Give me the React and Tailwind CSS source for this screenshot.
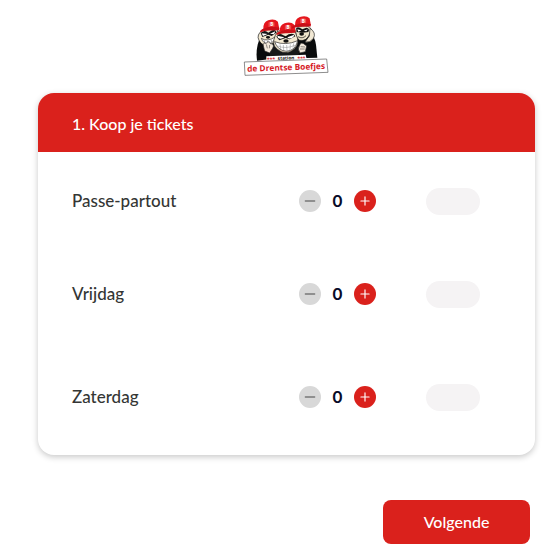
import { useState } from 'react'
import { Minus, Plus } from 'lucide-react'

const tickets = [
  { id: 'passe-partout', name: 'Passe-partout', spacing: 'mt-[35px]' },
  { id: 'vrijdag', name: 'Vrijdag', spacing: 'mt-[65px]' },
  { id: 'zaterdag', name: 'Zaterdag', spacing: 'mt-[75px]' },
]

function Cap({ letter }) {
  return (
    <g>
      <path d="M1 27 Q0 7 15 2 Q33 -4 43 6 L47 26 Q24 18 1 27Z" fill="#e5161d" />
      <path d="M3 25 Q-10 29 -8 36 Q8 30 21 31 L46 30 L47 23 Q20 17 3 25Z" fill="#c80f17" />
      <path d="M16 8 Q24 4 33 8 L33 20 Q24 17 16 21Z" fill="#ee5552" />
      <text x="25" y="19" textAnchor="middle" fill="#fff" fontSize="13" fontWeight="700">{letter}</text>
    </g>
  )
}

function Logo() {
  return (
    <svg viewBox="0 0 300 210" className="h-[70px] w-[100px] font-['Open_Sans',sans-serif]" role="img" aria-label="Station de Drentse Boefjes">
      {/* Black jumpers */}
      <path d="M70 88 Q58 121 63 152 L103 147 L124 91 L117 64 L82 65Z" fill="#090b0c" />
      <path d="M171 88 L220 68 Q237 80 240 104 L244 143 L180 145Z" fill="#090b0c" />
      <path d="M101 143 Q99 115 118 98 L183 104 Q192 120 187 143Z" fill="#17191a" />

      {/* Left head */}
      <path d="M80 59 Q60 75 69 91 Q79 111 103 104 Q124 97 129 75 L122 55 Q96 48 80 59Z" fill="#f3e9d0" stroke="#111" strokeWidth="2" />
      <path d="M74 69 Q86 57 97 68 L108 61 Q121 57 121 68 L107 78 L97 74 L79 81Z" fill="#121315" />
      <path d="M77 70 L95 72 L81 78ZM102 71 L118 64 L114 73Z" fill="#fff" />
      <path d="M76 85 Q94 97 119 80 Q114 99 98 102 Q82 102 76 85Z" fill="#fff" stroke="#222" strokeWidth="2" />
      <path d="M84 91 L87 98 M94 93 L96 100 M105 89 L107 96" stroke="#555" strokeWidth="1.5" />
      <ellipse cx="96" cy="82" rx="6" ry="4" fill="#111" />

      {/* Right head */}
      <path d="M181 54 Q175 82 191 91 Q211 94 219 76 L226 57 Q216 45 199 48Z" fill="#eee4cb" stroke="#111" strokeWidth="2" />
      <path d="M181 55 Q192 50 199 58 L211 53 Q223 55 217 66 L201 68 L182 66Z" fill="#111" />
      <path d="M184 58 L196 61 L187 65ZM203 62 L215 58 L211 64Z" fill="#fff" />
      <ellipse cx="197" cy="72" rx="7" ry="5" fill="#111" />
      <path d="M186 80 Q199 88 210 77" fill="none" stroke="#111" strokeWidth="2" />
      <path d="M222 55 Q242 68 232 86 Q222 99 207 96 L220 78Z" fill="#f1e8d4" stroke="#222" strokeWidth="2" />

      {/* Middle head */}
      <path d="M124 65 Q108 91 115 108 Q135 135 163 125 Q190 112 185 86 L177 64 Q150 52 124 65Z" fill="#f4ead2" stroke="#111" strokeWidth="2" />
      <path d="M121 80 Q128 67 142 76 L149 79 L158 73 Q175 67 178 79 L161 88 L149 84 L130 91Z" fill="#111" />
      <path d="M124 77 L145 82 Q136 89 126 84ZM154 82 L175 74 Q172 87 157 85Z" fill="#fff" />
      <path d="M116 95 Q149 108 185 92 Q179 122 151 124 Q124 121 116 95Z" fill="#fff" stroke="#222" strokeWidth="2" />
      <path d="M122 107 Q150 119 179 105 M132 103 L134 117 M142 105 L143 121 M152 105 L153 123 M163 103 L162 120 M173 100 L171 113" fill="none" stroke="#888" strokeWidth="1.5" />
      <ellipse cx="150" cy="93" rx="8" ry="5" fill="#111" />

      {/* Gloves */}
      <path d="M82 108 Q80 97 90 100 L96 95 Q104 95 103 101 Q117 101 110 115 L101 129 L86 123Z" fill="#f2e9db" stroke="#222" strokeWidth="2" />
      <path d="M91 103 L94 115 M101 105 L100 115" stroke="#222" strokeWidth="1.5" />
      <path d="M191 105 Q195 95 203 101 L212 108 L208 125 L192 129 Q183 117 191 105Z" fill="#f2e9db" stroke="#222" strokeWidth="2" />
      <path d="M194 110 L207 111 M192 117 L206 117" stroke="#222" strokeWidth="1.5" />

      {/* Caps */}
      <g transform="translate(81 29) scale(1.04 1.05)"><Cap letter="B" /></g>
      <g transform="translate(130 38) scale(1.04 1.02)"><Cap letter="B" /></g>
      <g transform="translate(176 19) scale(1.04 1.02)"><Cap letter="B" /></g>

      {/* Name plate */}
      <path d="M91 139 L209 134 L213 151 L91 158Z" fill="#fff" />
      <path d="M25 156 L272 147 L276 187 L27 196Z" fill="#fff" stroke="#555" strokeWidth="2" />
      <g transform="rotate(-2 150 165)" textAnchor="middle" fontWeight="700">
        <text x="151" y="149" fill="#111" fontSize="14">station</text>
        <text x="106" y="152" fill="#d6232b" fontSize="15">***</text>
        <text x="197" y="152" fill="#d6232b" fontSize="15">***</text>
        <text x="150" y="181" fill="#d6181f" fontSize="25">de Drentse Boefjes</text>
      </g>
    </svg>
  )
}

function TicketRow({ ticket, count, onChange }) {
  return (
    <li className={`flex h-7 items-center ${ticket.spacing}`}>
      <span className="flex-1 text-[17px] leading-6 font-medium text-[#343634]">{ticket.name}</span>
      <div className="flex items-center" role="group" aria-label={ticket.name}>
        <button
          type="button"
          aria-label={`Minder ${ticket.name}`}
          onClick={() => onChange(Math.max(0, count - 1))}
          className="flex size-[22px] items-center justify-center rounded-full bg-[#d8d8d8] text-[#777]"
        >
          <Minus className="size-4" strokeWidth={2} />
        </button>
        <output className="w-[33px] text-center text-[17px] leading-6 font-bold text-[#070b28]">{count}</output>
        <button
          type="button"
          aria-label={`Meer ${ticket.name}`}
          onClick={() => onChange(count + 1)}
          className="flex size-[22px] items-center justify-center rounded-full bg-[#da211c] text-white"
        >
          <Plus className="size-3.5" strokeWidth={2} />
        </button>
      </div>
      <span className="ml-[50px] h-[27px] w-[54px] rounded-full bg-[#f5f3f4]" />
    </li>
  )
}

export default function App() {
  const [counts, setCounts] = useState({})

  return (
    <main className="min-h-screen bg-white pt-2.5 pr-[25px] pb-4 pl-[38px] font-[Lato,sans-serif]">
      <header className="flex justify-center pr-[1px]">
        <Logo />
      </header>

      <section className="mt-[13px] overflow-hidden rounded-2xl bg-white shadow-[0_2px_6px_rgba(0,0,0,0.22)]">
        <h1 className="bg-[#da211c] px-[34px] pt-[19px] pb-4 text-[16px] leading-6 font-medium text-white">
          1. Koop je tickets
        </h1>
        <ul className="pr-[55px] pb-11 pl-[34px]">
          {tickets.map((ticket) => (
            <TicketRow
              key={ticket.id}
              ticket={ticket}
              count={counts[ticket.id] ?? 0}
              onChange={(value) => setCounts({ ...counts, [ticket.id]: value })}
            />
          ))}
        </ul>
      </section>

      <div className="mt-[45px] flex justify-end pr-[5px]">
        <button type="button" className="h-11 w-[147px] rounded-lg bg-[#da211c] text-[16px] leading-6 font-medium text-white">
          Volgende
        </button>
      </div>
    </main>
  )
}
